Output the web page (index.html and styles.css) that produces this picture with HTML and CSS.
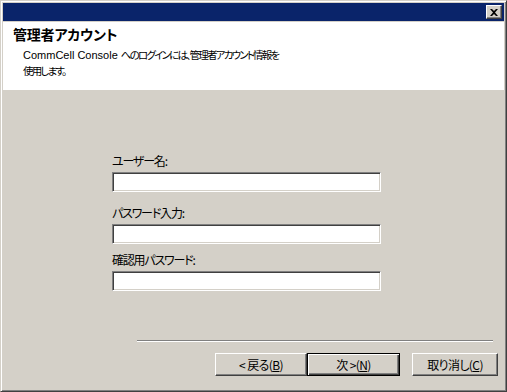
FILE: index.html
```html
<!DOCTYPE html>
<html>
<head>
    <title>管理者アカウント</title>
    <link rel="stylesheet" href="styles.css">
</head>
<body>
    <div class="window">
        <div class="title-bar">
            <button class="close-button">
                <svg width="8" height="7" viewBox="0 0 8 7"><path d="M0 0h2l2 2 2-2h2L5 3.5 8 7H6L4 5 2 7H0l3-3.5z" fill="#000"/></svg>
            </button>
        </div>
        <div class="header">
            <h1>管理者アカウント</h1>
            <p><span class="latin">CommCell Console </span>へのログインには、管理者アカウント情報を<br>使用します。</p>
        </div>
        <div class="content">
            <form class="login-form">
                <label class="field-label first">ユーザー名:</label>
                <input type="text" class="text-input">
                <label class="field-label second">パスワード入力:</label>
                <input type="password" class="text-input">
                <label class="field-label third">確認用パスワード:</label>
                <input type="password" class="text-input">
            </form>
            <div class="footer">
                <div class="separator"></div>
                <div class="buttons">
                    <button class="wizard-button back">&lt; 戻る(<u>B</u>)</button>
                    <button class="wizard-button next default">次 &gt;(<u>N</u>)</button>
                    <button class="wizard-button cancel">取り消し(<u>C</u>)</button>
                </div>
            </div>
        </div>
    </div>
</body>
</html>
```

FILE: styles.css
```css
body {
    margin: 0;
    width: 507px;
    height: 392px;
    font-family: "Noto Sans CJK JP", "Liberation Sans", sans-serif;
    font-size: 12px;
    color: #000;
    background-color: #d4d0c8;
}
.window {
    box-sizing: border-box;
    width: 507px;
    height: 392px;
    display: flex;
    flex-direction: column;
    padding: 1px;
    background-color: #d4d0c8;
    border-top: 1px solid #d4d0c8;
    border-left: 1px solid #d4d0c8;
    border-right: 1px solid #404040;
    border-bottom: 1px solid #404040;
    box-shadow: inset 1px 1px #fff, inset -1px -1px #808080;
}
.title-bar {
    height: 18px;
    margin: 1px;
    background-color: #0a246a;
    display: flex;
    justify-content: flex-end;
    align-items: center;
    padding-right: 2px;
}
.close-button {
    box-sizing: border-box;
    width: 16px;
    height: 14px;
    padding: 0;
    margin: 0;
    display: flex;
    justify-content: center;
    align-items: center;
    background-color: #d4d0c8;
    border-top: 1px solid #fff;
    border-left: 1px solid #fff;
    border-right: 1px solid #404040;
    border-bottom: 1px solid #404040;
    box-shadow: inset -1px -1px #808080;
}
.header {
    height: 68px;
    margin: 0 1px;
    background-color: #fff;
    box-sizing: border-box;
    padding: 3px 0 0 10px;
}
.header h1 {
    margin: 0;
    font-size: 14px;
    font-weight: bold;
    line-height: 18px;
    font-feature-settings: "palt";
    letter-spacing: -0.2px;
}
.header p {
    margin: 4px 0 0 10px;
    font-size: 10.5px;
    line-height: 15px;
    font-feature-settings: "palt";
    letter-spacing: -1.8px;
}
.header .latin {
    font-family: "Liberation Sans", sans-serif;
    font-size: 11px;
    letter-spacing: 0;
}
.content {
    flex: 1;
    display: flex;
    flex-direction: column;
    margin: 0 1px 1px 1px;
}
.login-form {
    display: flex;
    flex-direction: column;
    align-items: flex-start;
    padding-left: 109px;
}
.field-label {
    display: block;
    height: 14px;
    line-height: 14px;
    margin-bottom: 4px;
    font-size: 12px;
    font-feature-settings: "palt";
    letter-spacing: -1.2px;
}
.field-label.first {
    margin-top: 64px;
}
.field-label.second {
    margin-top: 14px;
}
.field-label.third {
    margin-top: 9px;
}
.text-input {
    box-sizing: border-box;
    width: 269px;
    height: 20px;
    margin: 0;
    padding: 0 2px;
    background-color: #fff;
    border-top: 1px solid #808080;
    border-left: 1px solid #808080;
    border-right: 1px solid #fff;
    border-bottom: 1px solid #fff;
    box-shadow: inset 1px 1px #404040, inset -1px -1px #d4d0c8;
    outline: none;
}
.footer {
    margin-top: auto;
}
.separator {
    height: 1px;
    margin: 0 11px 0 134px;
    background-color: #808080;
    border-bottom: 1px solid #fff;
}
.buttons {
    display: flex;
    justify-content: flex-end;
    padding: 11px 6px 13px 0;
}
.wizard-button {
    box-sizing: border-box;
    height: 23px;
    margin: 0;
    padding: 0;
    font-family: "Noto Sans CJK JP", "Liberation Sans", sans-serif;
    font-size: 12px;
    line-height: 14px;
    font-feature-settings: "palt";
    letter-spacing: -0.6px;
    color: #000;
    background-color: #d4d0c8;
    border-top: 1px solid #fff;
    border-left: 1px solid #fff;
    border-right: 1px solid #404040;
    border-bottom: 1px solid #404040;
    box-shadow: inset -1px -1px #808080;
}
.wizard-button.back {
    width: 92px;
}
.wizard-button.next {
    width: 93px;
}
.wizard-button.cancel {
    width: 86px;
    margin-left: 12px;
}
.wizard-button.default {
    border: 1px solid #000;
    box-shadow: inset 1px 1px #fff, inset -1px -1px #404040, inset -2px -2px #808080;
}
```
